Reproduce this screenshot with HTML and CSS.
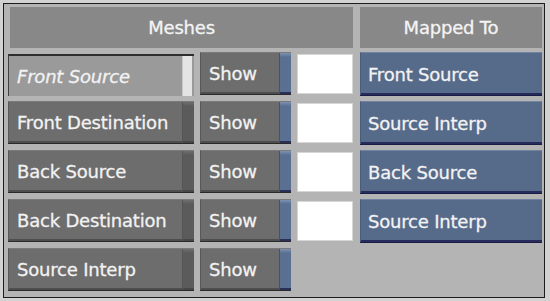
FILE: index.html
```html
<!DOCTYPE html>
<html lang="en">

<head>
    <meta charset="UTF-8">
    <title>Meshes</title>
    <link rel="stylesheet" href="styles.css">
</head>

<body>
    <div class="panel">
        <div class="grid">
            <div class="header meshes">Meshes</div>
            <div class="header mapped">Mapped To</div>

            <!-- row 1 -->
            <div class="name selected"><span class="label">Front Source</span><span class="strip"></span></div>
            <div class="show"><span class="label">Show</span><span class="strip"></span></div>
            <div class="swatch"></div>
            <div class="target"><span class="label">Front Source</span></div>

            <!-- row 2 -->
            <div class="name"><span class="label">Front Destination</span><span class="strip"></span></div>
            <div class="show"><span class="label">Show</span><span class="strip"></span></div>
            <div class="swatch"></div>
            <div class="target"><span class="label">Source Interp</span></div>

            <!-- row 3 -->
            <div class="name"><span class="label">Back Source</span><span class="strip"></span></div>
            <div class="show"><span class="label">Show</span><span class="strip"></span></div>
            <div class="swatch"></div>
            <div class="target"><span class="label">Back Source</span></div>

            <!-- row 4 -->
            <div class="name"><span class="label">Back Destination</span><span class="strip"></span></div>
            <div class="show"><span class="label">Show</span><span class="strip"></span></div>
            <div class="swatch"></div>
            <div class="target"><span class="label">Source Interp</span></div>

            <!-- row 5 -->
            <div class="name"><span class="label">Source Interp</span><span class="strip"></span></div>
            <div class="show"><span class="label">Show</span><span class="strip"></span></div>
        </div>
    </div>
</body>

</html>
```

FILE: styles.css
```css
body {
    margin: 0;
    background-color: #d2d2d2;
    font-family: 'DejaVu Sans', sans-serif;
}

.panel {
    margin: 3px 0 0 3px;
    width: 536px;
    height: 290px;
    border: 1px solid #1c1c1c;
    background-color: #b4b4b4;
    padding: 3px 0 0 4px;
    box-sizing: content-box;
}

.grid {
    display: grid;
    grid-template-columns: 186px 91px 56px 184px;
    grid-template-rows: 39px repeat(5, 43px);
    column-gap: 6px;
    row-gap: 6px;
}

.header {
    background-color: #888888;
    color: #f4f4f4;
    font-size: 18px;
    letter-spacing: -0.2px;
    -webkit-text-stroke: 0.3px #f4f4f4;
    display: flex;
    align-items: center;
    justify-content: center;
    margin-bottom: -2px;
}

.header.meshes {
    grid-column: 1 / 4;
    margin-left: 2px;
}

.header.mapped {
    grid-column: 4;
    margin-left: 1px;
    margin-right: 1px;
}

.grid > div:nth-child(3) {
    margin-top: 2px;
}

.label {
    flex: 1;
    display: flex;
    align-items: center;
    padding-left: 8px;
    color: #f2f2f2;
    font-size: 18px;
    letter-spacing: -0.2px;
    -webkit-text-stroke: 0.3px #f2f2f2;
    white-space: nowrap;
}

/* grey mesh name buttons */
.name,
.show {
    display: flex;
    background-color: #6d6d6d;
    border-top: 1px solid #7a7a7a;
    border-left: 1px solid #585858;
    box-shadow: 0 1px 0 #2a2a2a, inset 0 -2px 0 #4e4e4e;
    height: 42px;
    box-sizing: border-box;
}

.name .strip {
    width: 11px;
    background: linear-gradient(#6e6e6e, #5b5b5b 4px);
    border-left: 1px solid #555;
    box-shadow: inset 0 -2px 0 #474747;
}

.name.selected {
    background-color: #9a9a9a;
    border-top: 2px solid #2e2e2e;
    border-left: 1px solid #404040;
    box-shadow: none;
    height: 42px;
}

.name.selected .label {
    font-style: italic;
}

.name.selected .strip {
    width: 9px;
    background: #e4e4e4;
    border-left: 1px solid #c8c8c8;
    box-shadow: none;
    margin-right: 2px;
}

.show .strip {
    width: 11px;
    background: linear-gradient(#7d92b0, #5a7092 4px);
    border-left: 1px solid #44536a;
    box-shadow: inset 0 -2px 0 #2a2f5a;
}

.swatch {
    background-color: #ffffff;
    border: 1px solid #d6d6d6;
    margin-top: 2px;
    margin-bottom: 1px;
}

/* blue mapped-to buttons */
.target {
    display: flex;
    background-color: #566a8a;
    border-top: 1px solid #7084a2;
    border-left: 1px solid #4a5d7c;
    box-shadow: 0 1px 0 #1a1d45, inset 0 -2px 0 #262b5c;
    height: 43px;
    box-sizing: border-box;
    margin-left: 1px;
    margin-right: 1px;
}

.target .label {
    padding-left: 7px;
}
```
